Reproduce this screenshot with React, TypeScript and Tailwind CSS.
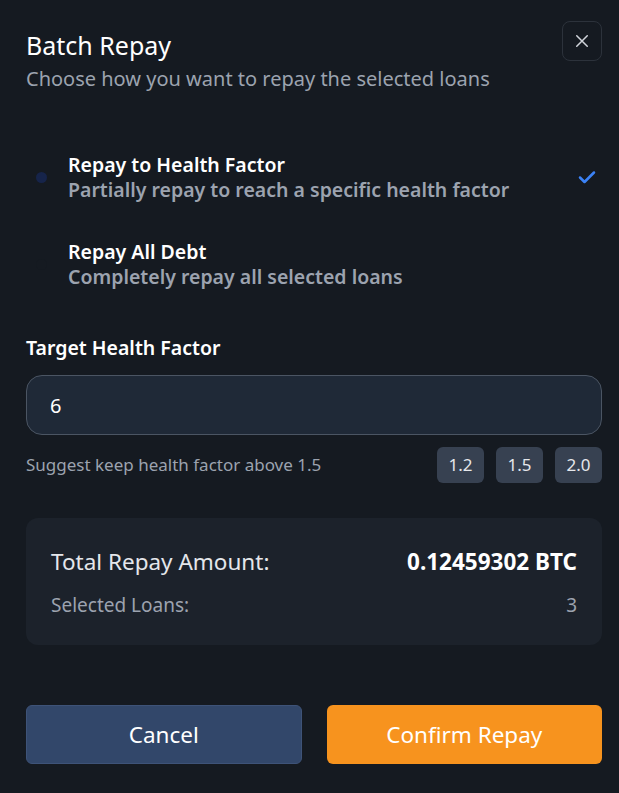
import React, { useState } from 'react';

export default function App() {
  const [mode, setMode] = useState<'hf' | 'all'>('hf');
  const [target, setTarget] = useState('6');

  return (
    <div
      className="min-h-screen w-full bg-[#151a21] text-white pl-[26px] pr-[17px] pt-[21px] pb-[29px] flex flex-col"
      style={{ fontFamily: '"Noto Sans", "Open Sans", sans-serif' }}
    >
      {/* Header */}
      <div className="flex items-start justify-between">
        <div>
          <h2 className="text-[25px] leading-[32px] mt-[8px] text-white">Batch Repay</h2>
          <p className="text-[20px] leading-[26px] mt-[5px] text-[#9ca3af]">
            Choose how you want to repay the selected loans
          </p>
        </div>
        <button className="w-[40px] h-[40px] rounded-[8px] border border-[#2c323b] flex items-center justify-center text-[#d1d5db]">
          <svg className="w-[18px] h-[18px]" viewBox="0 0 24 24" fill="none" stroke="currentColor" strokeWidth={2} strokeLinecap="round">
            <path d="M5 5l14 14M19 5L5 19" />
          </svg>
        </button>
      </div>

      {/* Options */}
      <div className="mt-[60px] flex flex-col gap-[37px]">
        <button className="flex items-center text-left" onClick={() => setMode('hf')}>
          <span className="w-[42px] flex justify-center -ml-[6px] mr-[6px]">
            <span className={`w-[11px] h-[11px] rounded-full ${mode === 'hf' ? 'bg-[#16244a]' : 'bg-[#151a21]'}`} />
          </span>
          <span className="flex-1">
            <span className="block text-[19.5px] leading-[25px] font-semibold text-white">Repay to Health Factor</span>
            <span className="block text-[19.5px] leading-[25px] font-semibold text-[#9ca3af]">
              Partially repay to reach a specific health factor
            </span>
          </span>
          {mode === 'hf' && (
            <svg className="w-[24px] h-[24px] mr-[3px] text-[#3b82f6]" viewBox="0 0 24 24" fill="none" stroke="currentColor" strokeWidth={2.5} strokeLinecap="round" strokeLinejoin="round">
              <path d="M5 12.5l4.5 4.5L19 7.5" />
            </svg>
          )}
        </button>
        <button className="flex items-center text-left" onClick={() => setMode('all')}>
          <span className="w-[42px] flex justify-center -ml-[6px] mr-[6px]">
            <span className={`w-[11px] h-[11px] rounded-full ${mode === 'all' ? 'bg-[#16244a]' : 'bg-[#151a21]'}`} />
          </span>
          <span className="flex-1">
            <span className="block text-[19.5px] leading-[25px] font-semibold text-white">Repay All Debt</span>
            <span className="block text-[19.5px] leading-[25px] font-semibold text-[#9ca3af]">
              Completely repay all selected loans
            </span>
          </span>
        </button>
      </div>

      {/* Target */}
      <div className="mt-[46px]">
        <label className="block text-[19.5px] leading-[25px] font-semibold text-white">Target Health Factor</label>
        <input
          value={target}
          onChange={(e) => setTarget(e.target.value)}
          className="mt-[15px] w-full h-[60px] rounded-[16px] bg-[#1f2937] border border-[#4b5563] px-[23px] text-[20px] text-white outline-none"
        />
        <div className="mt-[12px] flex items-center justify-between">
          <span className="text-[17px] text-[#9ca3af]">Suggest keep health factor above 1.5</span>
          <div className="flex gap-[12px]">
            {['1.2', '1.5', '2.0'].map((v) => (
              <button
                key={v}
                onClick={() => setTarget(v)}
                className="w-[47px] h-[36px] rounded-[6px] bg-[#374151] text-[17px] text-[#e5e7eb]"
              >
                {v}
              </button>
            ))}
          </div>
        </div>
      </div>

      {/* Summary */}
      <div className="mt-[35px] rounded-[12px] bg-[#1c222b] px-[25px] pt-[29px] pb-[27px]">
        <div className="flex items-center justify-between">
          <span className="text-[22.5px] leading-[30px] text-[#e5e7eb]">Total Repay Amount:</span>
          <span className="text-[22.5px] leading-[30px] font-bold text-white">0.12459302 BTC</span>
        </div>
        <div className="mt-[15px] flex items-center justify-between">
          <span className="text-[19px] leading-[26px] text-[#9ca3af]">Selected Loans:</span>
          <span className="text-[19px] leading-[26px] text-[#9ca3af]">3</span>
        </div>
      </div>

      {/* Actions */}
      <div className="mt-[60px] grid grid-cols-2 gap-[25px]">
        <button className="h-[59px] rounded-[6px] bg-[#32476a] border border-[#3e5378] text-[22.5px] text-white">
          Cancel
        </button>
        <button className="h-[59px] rounded-[6px] bg-[#f7931e] text-[22.5px] text-white">
          Confirm Repay
        </button>
      </div>
    </div>
  );
}
